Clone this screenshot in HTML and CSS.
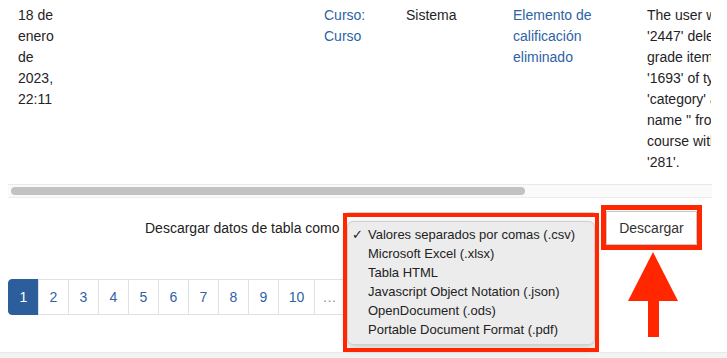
FILE: index.html
```html
<!DOCTYPE html>
<html lang="es">
<head>
<meta charset="utf-8">
<title>Registros</title>
<link rel="stylesheet" href="styles.css">
</head>
<body>
<div class="page">
  <div class="table-wrap">
    <div class="row">
      <div class="cell c-date">18 de enero de 2023, 22:11</div>
      <div class="cell c-empty"></div>
      <div class="cell c-ctx"><a href="#">Curso: Curso</a></div>
      <div class="cell c-orig">Sistema</div>
      <div class="cell c-event"><a href="#">Elemento de calificación eliminado</a></div>
      <div class="cell c-desc">The user with id '2447' deleted the grade item with id '1693' of type 'category' and name '' from the course with id '281'.</div>
    </div>
  </div>
  <div class="hscroll"><div class="thumb"></div></div>

  <div class="download">
    <span class="dl-label">Descargar datos de tabla como</span>
    <div class="select"></div>
    <button class="btn">Descargar</button>
  </div>

  <ul class="pagination">
    <li class="active"><a href="#">1</a></li>
    <li><a href="#">2</a></li>
    <li><a href="#">3</a></li>
    <li><a href="#">4</a></li>
    <li><a href="#">5</a></li>
    <li><a href="#">6</a></li>
    <li><a href="#">7</a></li>
    <li><a href="#">8</a></li>
    <li><a href="#">9</a></li>
    <li class="wide"><a href="#">10</a></li>
    <li class="dots"><span>…</span></li>
  </ul>
</div>
<div class="footer-strip"></div>

<div class="popup">
  <div class="opt checked"><span class="check">✓</span>Valores separados por comas (.csv)</div>
  <div class="opt">Microsoft Excel (.xlsx)</div>
  <div class="opt">Tabla HTML</div>
  <div class="opt">Javascript Object Notation (.json)</div>
  <div class="opt">OpenDocument (.ods)</div>
  <div class="opt">Portable Document Format (.pdf)</div>
</div>
<div class="mark mark-menu"></div>
<div class="mark mark-btn"></div>
<svg class="arrow" width="56" height="90" viewBox="0 0 56 90">
  <polygon points="27,2 2,51 52,51" fill="#ff2600"/>
  <rect x="22" y="50" width="11" height="37" fill="#ff2600"/>
</svg>
</body>
</html>
```

FILE: styles.css
```css
* { box-sizing: border-box; }
html, body { margin: 0; padding: 0; background: #fff; }
body {
  font-family: "Liberation Sans", Arial, Helvetica, sans-serif;
  font-size: 14px;
  color: #1f2326;
  width: 727px;
  height: 358px;
  overflow: hidden;
  position: relative;
}
a { color: #2e63a5; text-decoration: none; }

.page { padding: 0 8px; }

.table-wrap {
  width: 703px;
  height: 184px;
  overflow: hidden;
}
.row { display: flex; padding-top: 5px; line-height: 21px; }
.cell { flex: none; padding-left: 10px; }
.c-date { width: 60px; }
.c-empty { width: 246px; }
.c-ctx { width: 82px; }
.c-orig { width: 107px; }
.c-event { width: 134px; }
.c-desc { width: 132px; }

.hscroll {
  width: 704px;
  height: 14px;
  background: #fafafa;
  border-top: 1px solid #e8e8e8;
  border-bottom: 1px solid #ececec;
  padding: 2px 0 0 3px;
}
.thumb {
  width: 514px;
  height: 8px;
  border-radius: 4px;
  background: #c2c2c2;
}

.download {
  display: flex;
  align-items: center;
  margin-top: 13px;
  padding-left: 137px;
  height: 34px;
}
.dl-label { width: 200px; color: #222; }
.select {
  width: 252px;
  height: 32px;
  border: 1px solid #cfd4d9;
  border-radius: 4px;
  background: #fff;
}
.btn {
  margin-left: 9px;
  width: 91px;
  height: 34px;
  border: 1px solid #c9c9c9;
  background: #fff;
  font: 14px "Liberation Sans", Arial, sans-serif;
  color: #333;
  padding: 0;
}

.pagination {
  display: flex;
  list-style: none;
  margin: 34px 0 0;
  padding: 0;
}
.pagination li {
  width: 31px;
  height: 36px;
  margin-left: -1px;
  border: 1px solid #dee2e6;
  display: flex;
  align-items: center;
  justify-content: center;
  background: #fff;
}
.pagination li:first-child { margin-left: 0; border-radius: 4px 0 0 4px; }
.pagination li.wide { width: 37px; }
.pagination li.active { background: #2c5e9c; border-color: #2c5e9c; }
.pagination li.active a { color: #fff; }
.pagination li.dots { color: #8a8f94; }

.footer-strip {
  margin-top: 37px;
  height: 10px;
  background: #f3f3f3;
  border-top: 1px solid #e9e9e9;
}

.popup {
  position: absolute;
  left: 347px;
  top: 221px;
  width: 248px;
  height: 124px;
  background: #ececec;
  border: 1px solid #cfcfcf;
  border-radius: 6px;
  box-shadow: 0 3px 9px rgba(0,0,0,0.22);
  padding-top: 3px;
  font-size: 13px;
  color: #222;
}
.opt {
  position: relative;
  height: 19px;
  line-height: 19px;
  padding-left: 20px;
  white-space: nowrap;
}
.check { position: absolute; left: 4px; top: 0; }

.mark {
  position: absolute;
  border: 4px solid #ff2600;
}
.mark-menu { left: 343px; top: 213px; width: 256px; height: 139px; }
.mark-btn { left: 601px; top: 205px; width: 101px; height: 45px; border-width: 5px; }
.arrow { position: absolute; left: 626px; top: 250px; }
```
